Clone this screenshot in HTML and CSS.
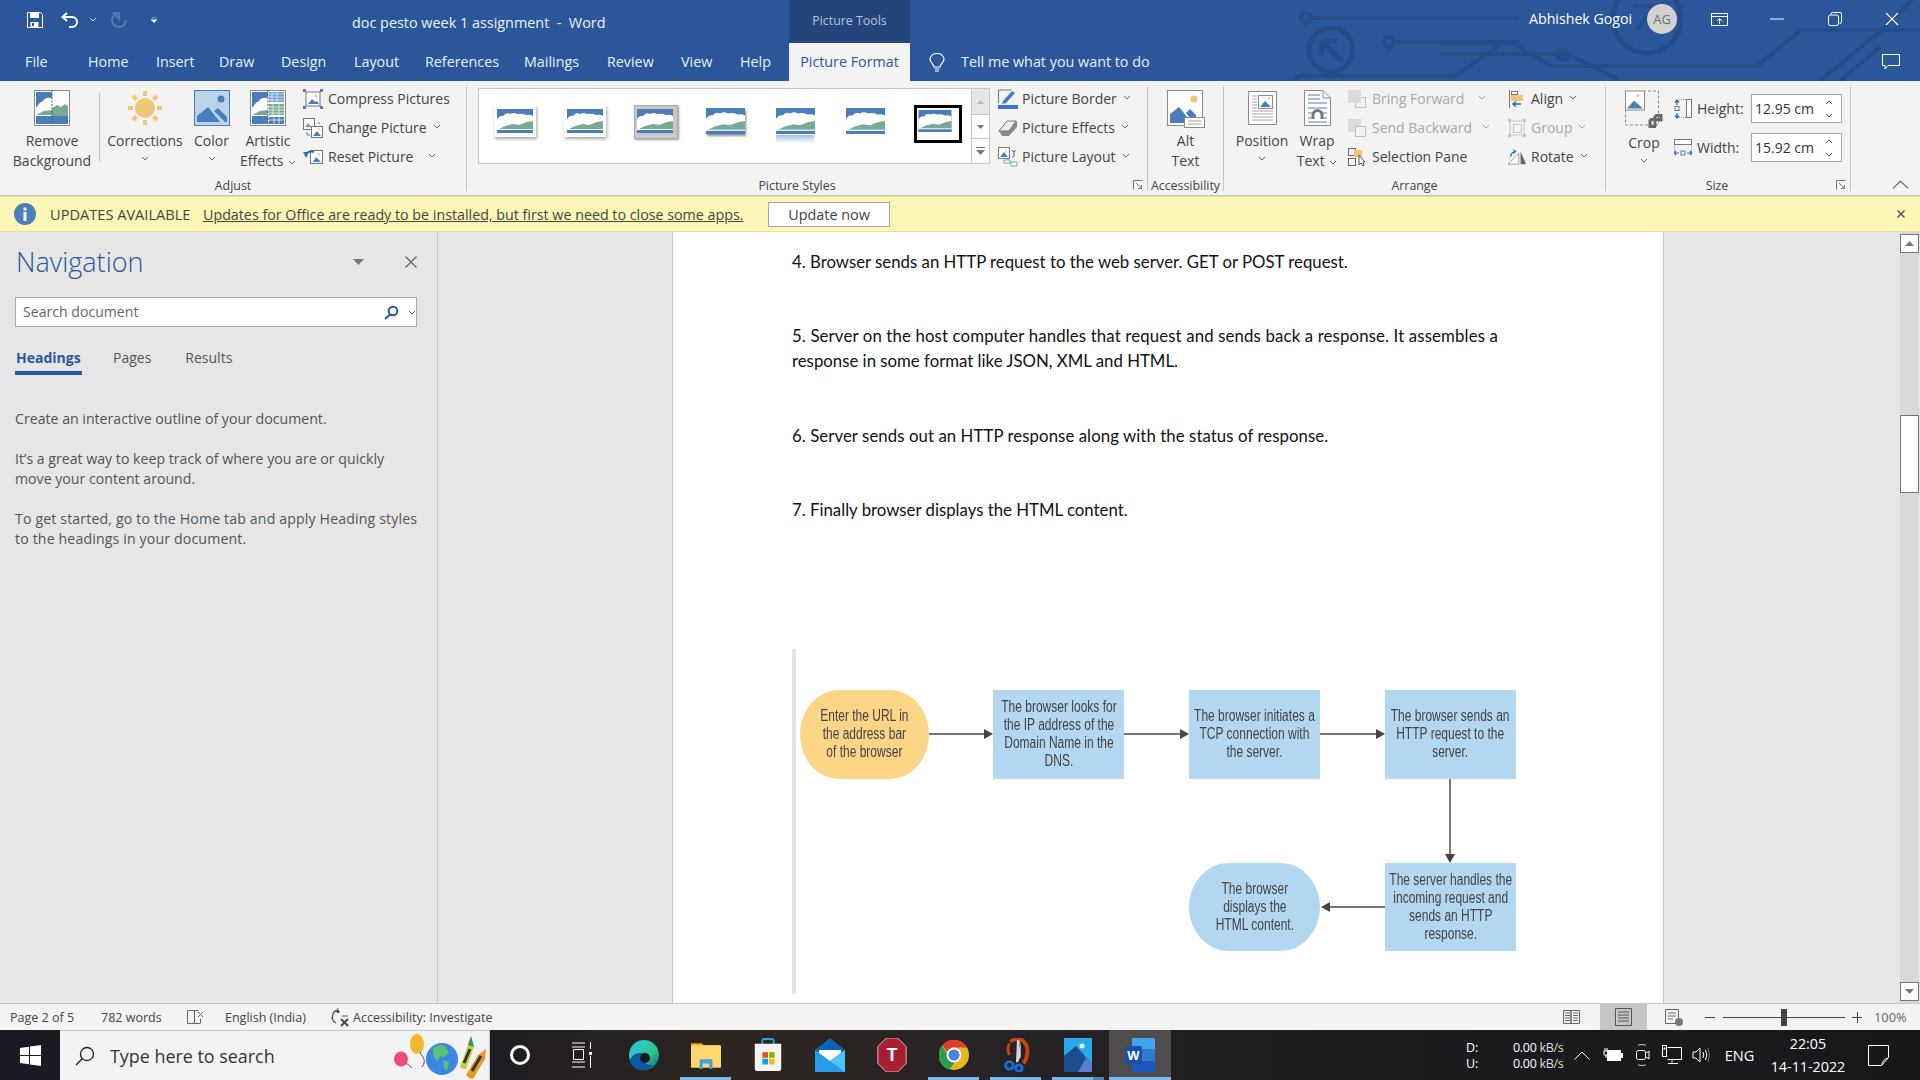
FILE: index.html
```html
<!DOCTYPE html>
<html lang="en">
<head>
<meta charset="utf-8">
<title>doc pesto week 1 assignment - Word</title>
<link rel="stylesheet" href="styles.css">
</head>
<body>
<svg class="defs" aria-hidden="true">
  <symbol id="chev" viewBox="0 0 8 5"><path d="M1 1l3 3 3-3" fill="none" stroke="#666" stroke-width="1"/></symbol>
  <symbol id="launch" viewBox="0 0 10 10"><path d="M.5 9.5v-9h9M3 3l5.5 5.5M5 8.5h3.5V5" fill="none" stroke="#777"/></symbol>
  <symbol id="thumb" viewBox="0 0 36 24"><rect width="36" height="24" fill="#4a7ebb"/><path d="M0 10q3-4 6-3 3-4 7-2 4-2 7 0 5-1 9 1 4-1 7 1v14H0z" fill="#fff"/><path d="M0 21l8-4 8-2 6 1 8-3 6-1v9z" fill="#7aa996"/><rect y="21" width="36" height="3" fill="#4a7ebb"/><rect y="20" width="36" height="1" fill="#fff"/></symbol>

  <symbol id="i-remove" viewBox="0 0 36 36"><rect x=".5" y=".5" width="35" height="35" fill="#fff" stroke="#8a8a8a"/><rect x="2" y="2" width="16" height="15" fill="#4a7ebb"/><path d="M2 19q3-7 7-8 2-4 9-3v11z" fill="#fff"/><path d="M2 25l8-4 8-1v5z" fill="#7aa996"/><path d="M18 26v-8l5-3 4 2 4-3 3 2v10z" fill="#7aa996"/><rect x="2" y="26" width="32" height="8" fill="#4a7ebb"/><path d="M18 0v36" stroke="#555" stroke-dasharray="2 1.5"/></symbol>
  <symbol id="i-sun" viewBox="0 0 36 36"><circle cx="18" cy="18" r="10" fill="#f0c674"/><path d="M18 1v5M18 30v5M1 18h5M30 18h5M6 6l3.500 3.500M26.500 26.500L30 30M6 30l3.500-3.500M26.500 9.500L30 6" stroke="#f0c674" stroke-width="4"/></symbol>
  <symbol id="i-color" viewBox="0 0 36 36"><rect x=".5" y=".5" width="35" height="35" fill="#bcd2e8" stroke="#4a7ebb"/><circle cx="27" cy="9" r="3.500" fill="#4a7ebb"/><path d="M3 32V26L14 17l12 15z" fill="#4a7ebb"/><path d="M20 21l4-3 9 9v5h-2z" fill="#4a7ebb"/></symbol>
  <symbol id="i-art" viewBox="0 0 36 36"><rect x=".5" y=".5" width="35" height="35" fill="#fff" stroke="#8a8a8a"/><rect x="2" y="2" width="16" height="15" fill="#4a7ebb"/><path d="M2 19q3-7 7-8 2-4 9-3v11z" fill="#fff"/><path d="M2 25l8-4 8-1v5z" fill="#7aa996"/><rect x="2" y="26" width="16" height="8" fill="#4a7ebb"/><rect x="19" y="2" width="15" height="10" fill="#6d9bcb"/><path d="M19 4h15M19 7h15M19 10h15M22 2v10M27 2v10" stroke="#cfe0ef"/><rect x="19" y="14" width="15" height="11" fill="#7aa996"/><path d="M19 17h15M19 20h15M19 23h15M23 14v11M29 14v11" stroke="#d6e6dc"/><rect x="19" y="27" width="15" height="7" fill="#4a7ebb"/><path d="M19 30h15M24 27v7M29 27v7" stroke="#cfe0ef"/><path d="M18 0v36" stroke="#555" stroke-dasharray="2 1.500"/></symbol>
  <symbol id="i-compress" viewBox="0 0 20 20"><rect x="3" y="3" width="14" height="14" fill="#fff" stroke="#777"/><path d="M5 15l4-5 3 3 2-1 2 3z" fill="#4a7ebb"/><circle cx="13" cy="7" r="1.500" fill="#f0c674"/><path d="M0 0h3v3H0zM17 0h3v3h-3zM0 17h3v3H0zM17 17h3v3h-3z" fill="#4a7ebb"/></symbol>
  <symbol id="i-change" viewBox="0 0 20 20"><rect x=".5" y=".5" width="11" height="11" fill="#fff" stroke="#777"/><path d="M2 9l3-4 4 4z" fill="#7aa996"/><rect x="8.500" y="8.500" width="11" height="11" fill="#fff" stroke="#777"/><path d="M10 18l4-5 4 5z" fill="#4a7ebb"/><circle cx="16" cy="11" r="1" fill="#f0c674"/><path d="M4 14v3h3M15 4l2 2" stroke="#4a7ebb" fill="none"/></symbol>
  <symbol id="i-reset" viewBox="0 0 20 20"><rect x="7.500" y="3.500" width="12" height="13" fill="#fff" stroke="#777"/><path d="M10 15l3-5 5 5z" fill="#4a7ebb"/><circle cx="16" cy="7" r="1.200" fill="#f0c674"/><path d="M2 9q3-6 9-4" fill="none" stroke="#2b6cb0" stroke-width="2"/><path d="M0 5l5 0-1 6z" fill="#2b6cb0"/></symbol>
  <symbol id="i-border" viewBox="0 0 20 20"><path d="M.5 14V1h13" fill="none" stroke="#777"/><path d="M5 12l9-10 3 2-9 10-4 1z" fill="#4a7ebb"/><rect y="16" width="20" height="4" fill="#4472c4"/></symbol>
  <symbol id="i-effects" viewBox="0 0 20 20"><path d="M1 13L9 3h10v6L11 18H4z" fill="#8a8a8a"/><path d="M1 13L9 3h9L11 13z" fill="#eee" stroke="#777"/></symbol>
  <symbol id="i-layout" viewBox="0 0 20 20"><rect x=".5" y=".5" width="11" height="11" fill="#fff" stroke="#777"/><path d="M2 10l4-5 4 5z" fill="#4a7ebb"/><circle cx="8" cy="3.500" r="1" fill="#f0c674"/><path d="M6 13h6v3H6zM13 15h6v4h-6z" fill="#fff" stroke="#7aa996"/><path d="M14 3l2 2 2-2M16 5v4l-2 2" stroke="#2b6cb0" fill="none"/></symbol>
  <symbol id="i-alt" viewBox="0 0 38 38"><rect x=".5" y=".5" width="35" height="35" fill="#fff" stroke="#8a8a8a"/><circle cx="27" cy="9" r="3.500" fill="#f0c674"/><path d="M3 33V24l9-7 13 16z" fill="#4a7ebb"/><path d="M19 23l4-4 6 6v3H23z" fill="#4a7ebb"/><rect x="17.500" y="27.500" width="20" height="10" fill="#fff" stroke="#8a8a8a"/><path d="M21 31h13M21 34h13" stroke="#999"/></symbol>
  <symbol id="i-pos" viewBox="0 0 29 34"><rect x=".5" y=".5" width="28" height="33" fill="#fff" stroke="#8a8a8a"/><path d="M4 5h5M4 8h5M4 11h5M4 14h5M4 17h5M4 20h21M4 23h21M4 26h21M4 29h21" stroke="#a6a6a6"/><rect x="10.500" y="4.500" width="14" height="13" fill="#fff" stroke="#8a8a8a"/><path d="M12 16l5-6 6 6z" fill="#4a7ebb"/><circle cx="21" cy="7.500" r="1.200" fill="#f0c674"/></symbol>
  <symbol id="i-wrap" viewBox="0 0 27 36"><path d="M.5.5H19l7.500 7.500v27.500H.5z" fill="#fff" stroke="#8a8a8a"/><path d="M19 .5V8h7.500" fill="none" stroke="#8a8a8a"/><path d="M4 5h12M4 9h12M4 13h19M4 18h19M4 23h6M17 23h6M4 28h6M17 28h6M4 32h19" stroke="#4a7ebb"/><path d="M9 29v-4a4.500 4.500 0 0 1 9 0v4" fill="none" stroke="#777" stroke-width="3"/></symbol>
  <symbol id="i-fwd" viewBox="0 0 18 18"><rect x="7.500" y="7.500" width="10" height="10" fill="none" stroke="#c0c0c0"/><rect width="13" height="13" fill="#dcdade"/></symbol>
  <symbol id="i-back" viewBox="0 0 18 18"><rect width="13" height="13" fill="#dcdade"/><rect x="7.500" y="7.500" width="10" height="10" fill="#f3f3f3" stroke="#c0c0c0"/></symbol>
  <symbol id="i-sel" viewBox="0 0 18 18"><rect x=".5" y=".5" width="7" height="7" fill="none" stroke="#666"/><rect x="6" y="2" width="8" height="7" fill="#f0c674"/><rect x=".5" y="10.500" width="7" height="7" fill="none" stroke="#666"/><path d="M11 7v10l2-2 2 3 1-1-1-3h2z" fill="#fff" stroke="#555"/></symbol>
  <symbol id="i-align" viewBox="0 0 16 18"><path d="M.5 0v18" stroke="#777"/><rect x="2.500" y="1.500" width="6" height="3" fill="#fff" stroke="#777"/><rect x="2" y="5" width="12" height="6" fill="#f0c674"/><path d="M12 14H4M7 11.500L4 14l3 2.500" fill="none" stroke="#2b6cb0" stroke-width="1.500"/></symbol>
  <symbol id="i-group" viewBox="0 0 18 18"><path d="M2 2h14v14H2z" fill="none" stroke="#c8c6c9"/><rect x="5.500" y="5.500" width="8" height="8" fill="none" stroke="#c8c6c9"/><path d="M0 0h3v3H0zM15 0h3v3h-3zM0 15h3v3H0zM15 15h3v3h-3z" fill="#c8c6c9"/></symbol>
  <symbol id="i-rotate" viewBox="0 0 20 18"><path d="M0 17L12 5v12z" fill="#fff" stroke="#999"/><path d="M14 3v14h6z" fill="#666"/><path d="M3 9q0-5 5-6M6 1l2.500 2L6 5" fill="none" stroke="#2b6cb0" stroke-width="1.300"/></symbol>
  <symbol id="i-crop" viewBox="0 0 38 37"><path d="M.5 19v15.500h33V.5H20" fill="none" stroke="#888" stroke-dasharray="3 2"/><rect x=".5" y=".5" width="19" height="19" fill="#fff" stroke="#8a8a8a"/><path d="M2 18l7-8 9 8z" fill="#4a7ebb"/><circle cx="13" cy="5" r="1.500" fill="#f0c674"/><path d="M30 25v11M25 29h11M25 29v7h6M30 25h6v6" fill="none" stroke="#666" stroke-width="3"/></symbol>
  <symbol id="i-height" viewBox="0 0 18 20"><path d="M3 1v5M1 3.500L3 1l2 2.500M3 19v-5M1 16.500L3 19l2-2.500" fill="none" stroke="#2b6cb0" stroke-width="1.300"/><rect x="1" y="7.500" width="4" height="4" fill="none" stroke="#777"/><rect x="12.500" y=".5" width="5" height="18" fill="#fff" stroke="#777"/><path d="M5 .5h7M5 18.500h7" stroke="#999" stroke-dasharray="1 1"/></symbol>
  <symbol id="i-width" viewBox="0 0 18 18"><rect x=".5" y=".5" width="17" height="5" fill="#fff" stroke="#777"/><path d="M.5 6v7M17.500 6v7" stroke="#999" stroke-dasharray="1 1"/><path d="M0 14h5M2 12l-2 2 2 2M18 14h-5M16 12l2 2-2 2" fill="none" stroke="#2b6cb0" stroke-width="1.200"/><rect x="7" y="12" width="4" height="4" fill="none" stroke="#777"/></symbol>
  <symbol id="spin" viewBox="0 0 8 20"><path d="M1 5l3-3 3 3M1 15l3 3 3-3" fill="none" stroke="#555"/></symbol>
</svg>

<header class="top">
  <svg class="circuit" viewBox="0 0 1920 81" aria-hidden="true">
    <g fill="none" stroke="#244c88" stroke-width="4">
      <circle cx="1306" cy="18" r="5"/><path d="M1311 18h208"/>
      <circle cx="1389" cy="42" r="5"/><path d="M1394 42h126M1295 79q5-5 12-3h148l50-35"/>
      <circle cx="1331" cy="50" r="22" stroke-width="5"/>
      <path d="M1322 41h15M1322 41v15M1323 42l19 19" stroke-width="5"/>
      <circle cx="1647" cy="19" r="34" stroke-width="5"/><path d="M1633 6h22l-18 24" stroke-width="4"/>
      <path d="M1440 43h72l40 23h205l44-36h119M1440 54h63l60 0 6 1 50 25M1563 50a5 5 0 1 0 .1 0M1820 81l62-51 30-30M1840 81l40-34"/>
    </g>
  </svg>
  <div class="titlerow">
    <div class="qat">
      <svg class="q-save" viewBox="0 0 16 16"><path d="M.5.500h13l2 2v13H.5z" fill="none" stroke="#fff"/><path d="M3 1h9v5H3zM3.500 10h8v5h-8z" fill="#fff"/><rect x="5" y="11" width="2" height="3" fill="#2b579a"/></svg>
      <svg class="q-undo" viewBox="0 0 18 16"><path d="M2 5h9a5 5 0 0 1 0 10H8M6 .9L1.500 5 6 9.100" fill="none" stroke="#fff" stroke-width="2"/></svg>
      <svg class="q-chev" viewBox="0 0 8 5"><path d="M1 1l3 3 3-3" fill="none" stroke="#d6e0ef"/></svg>
      <svg class="q-redo" viewBox="0 0 16 16"><path d="M8 1a7 7 0 1 0 7 7M8 1v6L3 1z" fill="none" stroke="#5379ae" stroke-width="2"/></svg>
      <svg class="q-more" viewBox="0 0 8 7"><path d="M1 .5h6M0 3l4 4 4-4z" fill="#fff" stroke="#fff" stroke-width=".6"/></svg>
    </div>
    <div class="doc-title">doc pesto week 1 assignment &nbsp;-&nbsp; Word</div>
    <div class="tools-tab">Picture Tools</div>
    <div class="user">Abhishek Gogoi</div>
    <div class="avatar">AG</div>
    <svg class="w-display" viewBox="0 0 17 13"><rect x=".5" y=".5" width="16" height="12" fill="none" stroke="#fff"/><path d="M.5 3.500h16M8.500 11V6M6 8l2.500-2.500L11 8" fill="none" stroke="#fff"/></svg>
    <svg class="w-min" viewBox="0 0 14 2"><path d="M0 1h14" stroke="#fff"/></svg>
    <svg class="w-max" viewBox="0 0 14 14"><rect x=".5" y="3" width="10" height="10.500" rx="2" fill="none" stroke="#fff"/><path d="M3 2.500V2a1.500 1.500 0 0 1 1.500-1.500H12A1.500 1.500 0 0 1 13.500 2v8a1.500 1.500 0 0 1-1.500 1.500h-.5" fill="none" stroke="#fff"/></svg>
    <svg class="w-close" viewBox="0 0 14 14"><path d="M1 1l12 12M13 1L1 13" stroke="#fff" stroke-width="1.100"/></svg>
  </div>
  <nav class="tabrow">
    <div class="tabs">
      <span class="tab">File</span>
      <span class="tab">Home</span>
      <span class="tab">Insert</span>
      <span class="tab">Draw</span>
      <span class="tab">Design</span>
      <span class="tab">Layout</span>
      <span class="tab">References</span>
      <span class="tab">Mailings</span>
      <span class="tab">Review</span>
      <span class="tab">View</span>
      <span class="tab">Help</span>
    </div>
    <span class="tab-active">Picture Format</span>
    <svg class="bulb" viewBox="0 0 16 20"><path d="M5 14c0-3-4-4-4-8a7 5.500 0 0 1 14 0c0 4-4 5-4 8z" fill="none" stroke="#fff" stroke-width="1.200"/><path d="M5.500 16h5M6 18h4" stroke="#fff" stroke-width="1.200"/></svg>
    <span class="tell">Tell me what you want to do</span>
    <svg class="comment" viewBox="0 0 18 16"><path d="M.5.500h17v11H6l-3 3.500v-3.500H.5z" fill="none" stroke="#fff"/></svg>
  </nav>
</header>

<section class="ribbon">
  <div class="group g-adjust">
    <div class="g-body">
      <div class="big b-remove"><svg class="ic36"><use href="#i-remove"/></svg><span>Remove<br>Background</span></div>
      <div class="vsep"></div>
      <div class="big b-corr"><svg class="ic36"><use href="#i-sun"/></svg><span>Corrections</span><svg class="chev chev-under"><use href="#chev"/></svg></div>
      <div class="big b-color"><svg class="ic36"><use href="#i-color"/></svg><span>Color</span><svg class="chev chev-under"><use href="#chev"/></svg></div>
      <div class="big b-art"><svg class="ic36"><use href="#i-art"/></svg><span>Artistic<br>Effects <svg class="chev"><use href="#chev"/></svg></span></div>
      <div class="smallcol sc-adj">
        <div class="srow"><svg class="ic20"><use href="#i-compress"/></svg>Compress Pictures</div>
        <div class="srow"><svg class="ic20"><use href="#i-change"/></svg>Change Picture <svg class="chev"><use href="#chev"/></svg></div>
        <div class="srow"><svg class="ic20"><use href="#i-reset"/></svg>Reset Picture <svg class="chev chev-wide"><use href="#chev"/></svg></div>
      </div>
    </div>
    <div class="g-label">Adjust</div>
  </div>
  <div class="group g-styles">
    <div class="g-body">
      <div class="gallery">
        <div class="thumbs">
          <div class="thumb t-card"><svg class="t-img"><use href="#thumb"/></svg></div>
          <div class="thumb t-card t-card2"><svg class="t-img"><use href="#thumb"/></svg></div>
          <div class="thumb t-grey"><svg class="t-img"><use href="#thumb"/></svg></div>
          <div class="thumb t-shadow"><svg class="t-full"><use href="#thumb"/></svg></div>
          <div class="thumb t-reflect"><svg class="t-full"><use href="#thumb"/></svg></div>
          <div class="thumb t-soft"><svg class="t-full"><use href="#thumb"/></svg></div>
          <div class="thumb t-black"><svg class="t-img"><use href="#thumb"/></svg></div>
        </div>
        <div class="gscroll">
          <div class="gs gs-up"><svg class="gs-i" viewBox="0 0 7 4"><path d="M0 4l3.500-4L7 4z" fill="#bbb"/></svg></div>
          <div class="gs gs-mid"><svg class="gs-i" viewBox="0 0 7 4"><path d="M0 0l3.500 4L7 0z" fill="#777"/></svg></div>
          <div class="gs gs-more"><svg class="gs-m" viewBox="0 0 9 8"><path d="M0 .5h9" stroke="#777"/><path d="M0 3l4.500 5L9 3z" fill="#777"/></svg></div>
        </div>
      </div>
      <div class="smallcol sc-pic">
        <div class="srow"><svg class="ic20"><use href="#i-border"/></svg>Picture Border <svg class="chev"><use href="#chev"/></svg></div>
        <div class="srow"><svg class="ic20"><use href="#i-effects"/></svg>Picture Effects <svg class="chev"><use href="#chev"/></svg></div>
        <div class="srow"><svg class="ic20"><use href="#i-layout"/></svg>Picture Layout <svg class="chev"><use href="#chev"/></svg></div>
      </div>
    </div>
    <div class="g-label gl-styles">Picture Styles</div>
    <svg class="launch"><use href="#launch"/></svg>
  </div>
  <div class="group g-access">
    <div class="g-body">
      <div class="big b-alt"><svg class="ic38"><use href="#i-alt"/></svg><span class="big-lines">Alt<br>Text</span></div>
    </div>
    <div class="g-label">Accessibility</div>
  </div>
  <div class="group g-arrange">
    <div class="g-body">
      <div class="big b-pos"><svg class="ic-pos"><use href="#i-pos"/></svg><span>Position</span><svg class="chev chev-under"><use href="#chev"/></svg></div>
      <div class="big b-wrap"><svg class="ic-wrap"><use href="#i-wrap"/></svg><span>Wrap<br>Text <svg class="chev"><use href="#chev"/></svg></span></div>
      <div class="smallcol sc-order">
        <div class="srow off"><svg class="ic18"><use href="#i-fwd"/></svg>Bring Forward <svg class="chev chev-gap2"><use href="#chev"/></svg></div>
        <div class="srow off"><svg class="ic18"><use href="#i-back"/></svg>Send Backward <svg class="chev chev-gap"><use href="#chev"/></svg></div>
        <div class="srow"><svg class="ic18"><use href="#i-sel"/></svg>Selection Pane</div>
      </div>
      <div class="smallcol sc-align">
        <div class="srow"><svg class="ic18"><use href="#i-align"/></svg>Align <svg class="chev"><use href="#chev"/></svg></div>
        <div class="srow off"><svg class="ic18"><use href="#i-group"/></svg>Group <svg class="chev"><use href="#chev"/></svg></div>
        <div class="srow"><svg class="ic18"><use href="#i-rotate"/></svg>Rotate <svg class="chev"><use href="#chev"/></svg></div>
      </div>
    </div>
    <div class="g-label">Arrange</div>
  </div>
  <div class="group g-size">
    <div class="g-body">
      <div class="big b-crop"><svg class="ic38"><use href="#i-crop"/></svg><span>Crop</span><svg class="chev chev-under"><use href="#chev"/></svg></div>
      <div class="sizes">
        <div class="sz"><svg class="ic-sz"><use href="#i-height"/></svg><span class="sz-l">Height:</span><div class="sz-in">12.95 cm<svg class="spin"><use href="#spin"/></svg></div></div>
        <div class="sz"><svg class="ic-sz"><use href="#i-width"/></svg><span class="sz-l">Width:</span><div class="sz-in">15.92 cm<svg class="spin"><use href="#spin"/></svg></div></div>
      </div>
    </div>
    <div class="g-label gl-size">Size</div>
    <svg class="launch"><use href="#launch"/></svg>
  </div>
  <svg class="collapse" viewBox="0 0 18 9"><path d="M1 8.500L9 1l8 7.500" fill="none" stroke="#555" stroke-width="1.100"/></svg>
</section>

<section class="notice">
  <svg class="info" viewBox="0 0 22 22"><circle cx="11" cy="11" r="11" fill="#4a7fb8"/><rect x="9.500" y="9" width="3" height="9" fill="#fff"/><rect x="9.500" y="4.500" width="3" height="3" fill="#fff"/></svg>
  <strong class="n-title">UPDATES AVAILABLE</strong>
  <span class="n-link">Updates for Office are ready to be installed, but first we need to close some apps.</span>
  <span class="n-btn">Update now</span>
  <svg class="n-x" viewBox="0 0 8 8"><path d="M.5.500l7 7M7.500.500l-7 7" stroke="#555" stroke-width="1.500"/></svg>
</section>

<main class="main">
  <aside class="nav">
    <div class="nav-head">
      <h1 class="nav-title">Navigation</h1>
      <svg class="nav-tri" viewBox="0 0 11 6"><path d="M0 0h11L5.500 6z" fill="#777"/></svg>
      <svg class="nav-x" viewBox="0 0 12 12"><path d="M.5.500l11 11M11.500.500l-11 11" stroke="#666" stroke-width="1.400"/></svg>
    </div>
    <div class="nav-search">
      <span class="ns-text">Search document</span>
      <svg class="ns-icon" viewBox="0 0 15 15"><circle cx="9" cy="6" r="4.300" fill="none" stroke="#2b579a" stroke-width="2"/><path d="M6 9.500L1 14" stroke="#2b579a" stroke-width="2"/></svg>
      <svg class="chev ns-chev"><use href="#chev"/></svg>
    </div>
    <div class="nav-tabs">
      <span class="nt nt-on">Headings</span>
      <span class="nt nt-pages">Pages</span>
      <span class="nt nt-res">Results</span>
    </div>
    <div class="nav-copy">
      <p>Create an interactive outline of your document.</p>
      <p>It’s a great way to keep track of where you are or quickly<br>move your content around.</p>
      <p class="nc-last">To get started, go to the Home tab and apply Heading styles<br>to the headings in your document.</p>
    </div>
  </aside>
  <div class="workspace">
    <article class="page">
      <p class="dp dp4">4. Browser sends an HTTP request to the web server. GET or POST request.</p>
      <p class="dp dp5">5. Server on the host computer handles that request and sends back a response. It assembles a<br>response in some format like JSON, XML and HTML.</p>
      <p class="dp dp6">6. Server sends out an HTTP response along with the status of response.</p>
      <p class="dp dp7">7. Finally browser displays the HTML content.</p>
      <figure class="figure">
        <svg class="arrows" viewBox="0 0 730 345" aria-hidden="true">
          <g stroke="#777" stroke-width="2" fill="none"><path d="M133 85h59M328 85h59M524 85h59M654 130v78M589 258h-55"/></g>
          <g fill="#444"><path d="M188 80l9 5-9 5zM384 80l9 5-9 5zM580 80l9 5-9 5zM649 205h10l-5 9zM534 253l-9 5 9 5z"/></g>
        </svg>
        <div class="node orange n1"><div class="nt1">Enter the URL in<br>the address bar<br>of the browser</div></div>
        <div class="node n2"><div class="nt1">The browser looks for<br>the IP address of the<br>Domain Name in the<br>DNS.</div></div>
        <div class="node n3"><div class="nt1">The browser initiates a<br>TCP connection with<br>the server.</div></div>
        <div class="node n4"><div class="nt1">The browser sends an<br>HTTP request to the<br>server.</div></div>
        <div class="node n5"><div class="nt1">The server handles the<br>incoming request and<br>sends an HTTP<br>response.</div></div>
        <div class="node round n6"><div class="nt1">The browser<br>displays the<br>HTML content.</div></div>
      </figure>
    </article>
    <div class="vscroll">
      <div class="vs-btn"><svg class="vs-tri" viewBox="0 0 9 5"><path d="M0 5l4.500-5L9 5z" fill="#777"/></svg></div>
      <div class="vs-thumb"></div>
      <div class="vs-btn vs-down"><svg class="vs-tri" viewBox="0 0 9 5"><path d="M0 0l4.500 5L9 0z" fill="#777"/></svg></div>
    </div>
  </div>
</main>

<footer class="status">
  <span class="st st-page">Page 2 of 5</span>
  <span class="st st-words">782 words</span>
  <svg class="st-book" viewBox="0 0 17 16"><path d="M.5 1.500h7v13h-7zM7.500 1.500h4M7.500 14.500h6M13.500 10v4" fill="none" stroke="#666"/><path d="M11 3l5 5M16 3l-5 5" stroke="#666"/></svg>
  <span class="st st-lang">English (India)</span>
  <svg class="st-acc" viewBox="0 0 20 20"><path d="M8 3a7 7 0 0 0-2 13" fill="none" stroke="#555" stroke-width="1.300"/><path d="M8 1v5M6 4l2 2 2-2M2 11H1M12 9h6" stroke="#555"/><path d="M11 12l7 7M18 12l-7 7" stroke="#444" stroke-width="1.800"/></svg>
  <span class="st st-acc-t">Accessibility: Investigate</span>
  <div class="views">
    <svg class="v-read" viewBox="0 0 17 16"><path d="M.5 1.500h7.500v13H.5zM8 1.500h8.500v13H8zM2 4h5M2 6.500h5M2 9h5M2 11.500h5M10 4h5M10 6.500h5M10 9h5M10 11.500h5" fill="none" stroke="#666"/></svg>
    <div class="v-print"><svg class="v-print-i" viewBox="0 0 17 18"><path d="M.5.500h16v17H.5zM3 4h11M3 7h11M3 10h11M3 13h11" fill="none" stroke="#555"/></svg></div>
    <svg class="v-web" viewBox="0 0 18 17"><path d="M.5.500h13v14H.5zM3 4h8M3 7h8M3 10h5" fill="none" stroke="#666"/><circle cx="14" cy="13" r="4" fill="#777"/></svg>
  </div>
  <div class="zoom">
    <span class="z-minus"></span>
    <div class="z-track"><span class="z-thumb"></span></div>
    <span class="z-plus"></span>
    <span class="st z-val">100%</span>
  </div>
</footer>

<div class="taskbar">
  <div class="start"><svg class="win" viewBox="0 0 21 21"><path d="M0 3l9-1.300V10H0zM10 1.500L21 0v10H10zM0 11h9v8.300L0 18zM10 11h11v10l-11-1.500z" fill="#fff"/></svg></div>
  <div class="search">
    <svg class="s-mag" viewBox="0 0 20 20"><circle cx="12" cy="8" r="6.500" fill="none" stroke="#222" stroke-width="1.300"/><path d="M7.500 12.500L1 19" stroke="#222" stroke-width="1.500"/></svg>
    <span class="s-text">Type here to search</span>
    <svg class="doodle" viewBox="0 0 96 50">
      <path d="M28 14q-3 8 2 13 3 5-1 10M10 32q6 2 9 6" fill="none" stroke="#5a3ba0"/>
      <ellipse cx="24" cy="14" rx="7" ry="10" fill="#f4b731"/>
      <ellipse cx="8" cy="29" rx="7" ry="7.500" fill="#ee4d77"/>
      <circle cx="49" cy="29" r="16" fill="#3a86e0"/>
      <path d="M40 18q6-4 12-2l4 7-5 4-4-1-2 5-4-3zM50 30l6 2-2 9-3-3z" fill="#5cc27a"/>
      <path d="M70 39l-3-2 8-22 3-9 3 11-8 22z" fill="#c5d13a"/><path d="M75 15l3-9 3 11z" fill="#3f8f6a"/><path d="M71 33l6-14" stroke="#333" stroke-width="3"/>
      <path d="M76 48l-3-3 12-20 8-6-1 10-12 20z" fill="#e89a2c"/><path d="M79 41l9-15" stroke="#333" stroke-width="3"/>
    </svg>
  </div>
  <div class="tb tb-cortana"><span class="cortana"></span></div>
  <div class="tb tb-tv"><svg class="tv" viewBox="0 0 21 26"><path d="M1 1h13M1 25h13M2.500 7.500h10v10h-10zM1 20h13M1 5h13M19.500 0v7M19.500 14v12" fill="none" stroke="#fff"/><rect x="18" y="10" width="3" height="3" fill="#fff"/></svg></div>
  <div class="tb"><svg class="app" viewBox="0 0 30 34"><defs><linearGradient id="edge" x1="0" y1="0" x2="1" y2="1"><stop offset="0" stop-color="#35c1f1"/><stop offset=".6" stop-color="#2cc88d"/><stop offset="1" stop-color="#0c59a4"/></linearGradient></defs><circle cx="15" cy="17" r="15" fill="url(#edge)"/><path d="M1 22q3-8 12-7 6 1 3 6-2 6 8 6-5 7-13 5Q2 30 1 22z" fill="#0c59a4"/><circle cx="16" cy="20" r="5" fill="#1b1a20"/></svg></div>
  <div class="tb running"><svg class="app" viewBox="0 0 28 28"><path d="M0 3h10l2 2h15v20H0z" fill="#e8a90f"/><rect y="5" width="28" height="21" rx="1" fill="#ffd76e"/><path d="M8 27v-9h12v9h-3v-5h-6v5z" fill="#4a9be0"/></svg></div>
  <div class="tb"><svg class="app" viewBox="0 0 30 36"><path d="M9 8V3q0-2 2-2h8q2 0 2 2v5" fill="none" stroke="#1aa7e0" stroke-width="2"/><path d="M1 6h28v26q0 3-3 3H4q-3 0-3-3z" fill="#f4f4f4"/><path d="M9 15h6v6H9z" fill="#f25022"/><path d="M16 15h6v6h-6z" fill="#7fba00"/><path d="M9 22h6v6H9z" fill="#00a4ef"/><path d="M16 22h6v6h-6z" fill="#ffb900"/></svg></div>
  <div class="tb"><svg class="app" viewBox="0 0 30 34"><path d="M0 12L15 0l15 12v22H0z" fill="#0a64b8"/><path d="M4 12h22v8l-11 8-11-8z" fill="#fff"/><path d="M0 12l15 11 15-11v22H0z" fill="#2a9be8"/><path d="M15 23l15-11v22z" fill="#49c6f7"/></svg></div>
  <div class="tb"><svg class="app" viewBox="0 0 30 36"><path d="M9 0h12l9 9v18l-9 9H9l-9-9V9z" fill="#a81e30" stroke="#eec" stroke-width=".8"/><text class="t-letter" x="15" y="24" text-anchor="middle">T</text></svg></div>
  <div class="tb running"><svg class="app" viewBox="0 0 30 30"><circle cx="15" cy="15" r="15" fill="#e8b71f"/><path d="M15 0a15 15 0 0 1 13 7.500H15a7.500 7.500 0 0 0-6.500 4L3 5.400A15 15 0 0 1 15 0z" fill="#d93f30"/><path d="M3 5.400l6 10 6.500 7 -5 7.300A15 15 0 0 1 3 5.400z" fill="#2c9d4e"/><circle cx="15" cy="15" r="6.500" fill="#4a84e0" stroke="#fff" stroke-width="1.800"/></svg></div>
  <div class="tb running"><svg class="app" viewBox="0 0 26 36"><path d="M7 4q6-5 12-2 7 5 6 14-1 7-4 11" fill="none" stroke="#c9430c" stroke-width="4"/><path d="M6 6q-3 5 0 12" fill="none" stroke="#c9430c" stroke-width="3"/><path d="M14 2l3 1-1 22-3 1zM18 4v16l-4 6z" fill="#d5d5d5"/><circle cx="6" cy="29" r="4" fill="none" stroke="#0e74d8" stroke-width="3"/><circle cx="16" cy="32" r="3.500" fill="none" stroke="#0e74d8" stroke-width="3"/></svg></div>
  <div class="tb running run-split"><svg class="app" viewBox="0 0 28 34"><rect width="28" height="34" fill="#29a9eb"/><circle cx="18" cy="8" r="2.500" fill="#fff"/><path d="M0 34V18l12-10 16 18v8z" fill="#1b4f8c"/><path d="M14 34l8-14 6 6v8z" fill="#5b7fcf"/></svg></div>
  <div class="tb running tb-active"><svg class="app" viewBox="0 0 30 34"><rect x="7" width="23" height="34" rx="1" fill="#41a5ee"/><rect x="7" y="11" width="23" height="12" fill="#2b7cd3"/><rect x="7" y="23" width="23" height="11" fill="#185abd"/><rect y="8" width="17" height="18" rx="1.500" fill="#1a4fa8"/><text class="w-letter" x="8.500" y="22" text-anchor="middle">W</text></svg></div>
  <div class="tray">
    <div class="speed"><span>D:</span><b>0.00 <i>kB/s</i></b><span>U:</span><b>0.00 <i>kB/s</i></b></div>
    <div class="ti ti-chev"><svg class="t-chev" viewBox="0 0 16 9"><path d="M.5 8.500L8 1l7.500 7.500" fill="none" stroke="#fff"/></svg></div>
    <div class="ti ti-bat"><svg class="t-bat" viewBox="0 0 20 14"><path d="M2 0v3M4 0v3M1 3h4v4H1zM3 7v3" stroke="#fff" fill="none"/><rect x="4.500" y="2.500" width="13" height="10" fill="#fff" stroke="#fff"/><rect x="18" y="5" width="2" height="5" fill="#fff"/></svg></div>
    <div class="ti ti-meet"><svg class="t-meet" viewBox="0 0 15 22"><path d="M3 1q4-1 8 0M3 21q4 1 8 0" stroke="#ccc" fill="none"/><rect x="1.500" y="6.500" width="9" height="9" rx="2" fill="none" stroke="#fff"/><path d="M11 9l3-2v8l-3-2" fill="none" stroke="#fff"/></svg></div>
    <div class="ti ti-net"><svg class="t-net" viewBox="0 0 20 20"><path d="M5.500 2.500h14v12h-14M10 14.500v3M6 18.500h10" fill="none" stroke="#fff"/><rect x=".5" y=".5" width="4" height="11" fill="#1c1c1e" stroke="#fff"/><rect x="1.500" y="2.500" width="2" height="2" fill="#fff"/></svg></div>
    <div class="ti ti-vol"><svg class="t-vol" viewBox="0 0 18 18"><path d="M1 6h3l4-4v14l-4-4H1z" fill="none" stroke="#fff"/><path d="M11 6q1.500 3 0 6M13.500 4q2.500 5 0 10" fill="none" stroke="#fff"/><path d="M16 2q3 7 0 14" fill="none" stroke="#777"/></svg></div>
    <div class="ti ti-eng">ENG</div>
    <div class="clock"><div>22:05</div><div>14-11-2022</div></div>
    <svg class="t-note" viewBox="0 0 21 21"><path d="M.5.500h20v12l-7 8H.5z" fill="none" stroke="#fff"/><path d="M14 20q0-5 6-7" fill="none" stroke="#fff"/></svg>
  </div>
</div>
</body>
</html>
```

FILE: styles.css
```css
* { box-sizing: border-box; }
html, body { margin: 0; padding: 0; }
body {
  width: 1920px; height: 1080px; overflow: hidden;
  display: flex; flex-direction: column;
  font-family: "Open Sans", "Noto Sans", sans-serif;
  font-size: 14px; color: #444;
  background: #e6e6e6;
}
svg { display: block; flex: none; }
.defs { position: absolute; width: 0; height: 0; }

/* Title bar */
.top { position: relative; height: 81px; flex: none; background: #2b579a; color: #fff; overflow: hidden; }
.circuit { position: absolute; left: 0; top: 0; width: 1920px; height: 81px; }
.titlerow { position: relative; height: 43px; display: flex; align-items: flex-start; }
.qat { width: 352px; height: 43px; display: flex; align-items: center; padding-left: 27px; flex: none; }
.q-save { width: 16px; height: 16px; margin-top: -4px; }
.q-undo { width: 18px; height: 16px; margin-left: 18px; margin-top: -4px; }
.q-chev { width: 8px; height: 5px; margin-left: 10px; margin-top: -4px; }
.q-redo { width: 16px; height: 16px; margin-left: 14px; margin-top: -4px; }
.q-more { width: 6px; height: 6px; margin-left: 24px; margin-top: -4px; }
.doc-title { width: 437px; font-size: 14.4px; line-height: 46px; flex: none; color: #eef2f8; }
.tools-tab { width: 121px; height: 43px; flex: none; background: #234579; color: #b4c4dc; font-size: 12.4px; line-height: 41px; text-align: center; }
.user { margin-left: 619px; width: 118px; line-height: 38px; font-size: 14.2px; white-space: nowrap; flex: none; }
.avatar { width: 30px; height: 30px; margin-top: 4px; border-radius: 50%; background: #d2d2d2; color: #6e6e6e; font-size: 13px; line-height: 30px; text-align: center; flex: none; }
.w-display { width: 17px; height: 13px; margin-left: 34px; margin-top: 13px; }
.w-min { width: 14px; height: 2px; margin-left: 42px; margin-top: 18px; }
.w-max { width: 14px; height: 14px; margin-left: 44px; margin-top: 12px; }
.w-close { width: 14px; height: 14px; margin-left: 43px; margin-top: 12px; }

.tabrow { position: relative; height: 38px; display: flex; align-items: center; padding-left: 25px; }
.tabs { display: grid; grid-template-columns: 63px 68px 63px 62px 73px 71px 99px 83px 74px 59px 49px; width: 764px; flex: none; margin-top: -2px; }
.tab { font-size: 14.3px; color: #eaf0f8; white-space: nowrap; }
.tab-active { width: 121px; height: 38px; background: #f3f3f3; color: #2b579a; font-size: 14.3px; line-height: 37px; text-align: center; flex: none; }
.bulb { width: 16px; height: 20px; margin-left: 19px; margin-top: 2px; }
.tell { margin-left: 16px; font-size: 14.35px; color: #eaf0f8; white-space: nowrap; margin-top: -2px; }
.comment { width: 18px; height: 16px; margin-left: auto; margin-right: 20px; }

/* Ribbon */
.ribbon { position: relative; height: 115px; flex: none; display: flex; background: #f3f3f3; border-bottom: 1px solid #c6c6c6; }
.group { position: relative; height: 105px; margin-top: 5px; border-right: 1px solid #c6c6c6; display: flex; flex-direction: column; flex: none; }
.g-body { height: 93px; display: flex; flex: none; }
.g-label { height: 12px; line-height: 14px; text-align: center; font-size: 12.4px; color: #444; white-space: nowrap; }
.gl-styles { padding-right: 20px; }
.gl-size { padding-right: 22px; }
.g-adjust { width: 467px; }
.g-styles { width: 681px; }
.g-access { width: 76px; }
.g-arrange { width: 382px; }
.g-size { width: 245px; }
.launch { position: absolute; right: 4px; bottom: 1px; width: 10px; height: 10px; }
.collapse { position: absolute; left: 1892px; top: 99px; width: 17px; height: 9px; }

.big { display: flex; flex-direction: column; align-items: center; text-align: center; line-height: 20px; padding-top: 4px; flex: none; white-space: nowrap; }
.big > span { margin-top: 5px; }
.big > span .chev { display: inline-block; vertical-align: middle; margin-left: 1px; }
.ic36 { width: 36px; height: 36px; }
.ic38 { width: 38px; height: 38px; }
.ic-pos { width: 29px; height: 34px; margin-top: 1px; margin-bottom: 1px; }
.ic-wrap { width: 27px; height: 36px; }
.ic-sz { width: 18px; height: 20px; }
.ic20 { width: 20px; height: 20px; margin-right: 5px; }
.sc-pic .ic20 { margin-right: 4px; }
.ic18 { width: 18px; height: 18px; margin-right: 5px; }
.sc-order .ic18 { margin-right: 6px; }
.chev { width: 8px; height: 5px; }
.chev-under { margin-top: 5px; }
.big-lines { margin-top: 3px !important; }
.b-remove { width: 84px; margin-left: 10px; }
.vsep { width: 1px; height: 69px; background: #c6c6c6; margin: 7px 0 0 5px; flex: none; }
.b-corr { width: 90px; }
.b-color { width: 43px; }
.b-art { width: 70px; }
.smallcol { display: flex; flex-direction: column; margin-top: -2px; flex: none; }
.srow { height: 29px; display: flex; align-items: center; white-space: nowrap; }
.srow .chev { margin-left: 6px; margin-top: -2px; }
.srow .chev-wide { margin-left: 15px; }
.srow .chev-gap { margin-left: 10px; }
.srow .chev-gap2 { margin-left: 14px; }
.off { color: #a8a8a8; }
.off .chev { opacity: .55; }

.gallery { width: 512px; height: 76px; margin: 2px 0 0 11px; display: flex; background: #fff; border: 1px solid #c6c6c6; flex: none; }
.thumbs { display: flex; width: 492px; flex: none; padding-left: 1px; }
.thumb { width: 70px; height: 32px; margin-top: 16px; display: flex; align-items: center; justify-content: center; flex: none; position: relative; }
.t-img { width: 36px; height: 24px; }
.t-full { width: 39px; height: 28px; }
.t-card .t-img, .t-card2 .t-img { background: #fff; }
.t-card::before { content: ""; position: absolute; left: 14px; top: 0; width: 42px; height: 32px; background: #fff; box-shadow: 1px 2px 3px rgba(0,0,0,.35); }
.t-card .t-img { position: relative; }
.t-grey::before { content: ""; position: absolute; left: 14px; top: 0; width: 42px; height: 32px; background: #c8c8c8; border: 1px solid #aaa; box-shadow: 1px 1px 2px rgba(0,0,0,.4); }
.t-grey .t-img { position: relative; }
.t-shadow .t-full { filter: drop-shadow(1px 2px 1px rgba(0,0,0,.45)); }
.t-reflect::after { content: ""; position: absolute; left: 16px; top: 30px; width: 38px; height: 8px; background: linear-gradient(#9fbfe0, #fff); }
.t-soft .t-full { filter: blur(.6px); }
.t-black::before { content: ""; position: absolute; left: 14px; top: 0; width: 42px; height: 32px; background: #fff; border: 3px solid #000; outline: 0; }
.t-black .t-img { position: relative; width: 34px; height: 22px; }
.gscroll { width: 18px; display: flex; flex-direction: column; flex: none; border-left: 1px solid #c6c6c6; }
.gs { display: flex; align-items: center; justify-content: center; background: #fff; border-bottom: 1px solid #c6c6c6; flex: none; }
.gs-up { height: 26px; background: #e6e6e6; }
.gs-mid { height: 24px; }
.gs-more { height: 24px; border-bottom: 0; }
.gs-i { width: 7px; height: 4px; }
.gs-m { width: 9px; height: 8px; }
.sc-pic { margin-left: 8px; }
.sc-order { margin-left: 11px; width: 160px; }
.b-alt { width: 75px; }
.b-pos { width: 70px; margin-left: 3px; }
.b-wrap { width: 40px; }
.b-crop { width: 50px; margin-left: 13px; }
.sizes { margin-left: 5px; margin-top: 8px; display: flex; flex-direction: column; gap: 10px; flex: none; }
.sz { height: 29px; display: flex; align-items: center; }
.sz-l { width: 54px; margin-left: 5px; white-space: nowrap; }
.sz-in { width: 91px; height: 29px; background: #fff; border: 1px solid #a6a6a6; display: flex; align-items: center; padding-left: 3px; color: #333; white-space: nowrap; }
.spin { width: 8px; height: 20px; margin-left: auto; margin-right: 8px; }

/* Notice bar */
.notice { height: 36px; flex: none; display: flex; align-items: center; background: #fcf7b6; border-top: 1px solid #e6dd8e; border-bottom: 1px solid #e6e09a; padding-left: 14px; }
.info { width: 22px; height: 22px; }
.n-title { margin-left: 14px; font-weight: 400; font-size: 14.6px; color: #444; white-space: nowrap; width: 153px; flex: none; }
.n-link { font-size: 14.28px; text-decoration: underline; color: #444; width: 565px; white-space: nowrap; flex: none; }
.n-btn { width: 122px; height: 25px; background: #fff; border: 1px solid #a6a6a6; text-align: center; line-height: 23px; flex: none; font-size: 14.4px; }
.n-x { width: 8px; height: 8px; margin-left: auto; margin-right: 15px; }

/* Main */
.main { height: 771px; flex: none; display: flex; }
.nav { width: 438px; flex: none; background: #e6e6e6; border-right: 1px solid #c6c6c6; padding: 0 20px 0 15px; }
.nav-head { height: 59px; display: flex; align-items: center; }
.nav-title { margin: 0; font-size: 27px; font-weight: 300; color: #2b579a; width: 338px; flex: none; position: relative; left: 1px; }
.nav-tri { width: 11px; height: 6px; }
.nav-x { width: 12px; height: 12px; margin-left: 41px; }
.nav-search { width: 402px; height: 30px; margin-top: 6px; background: #fff; border: 1px solid #aaa; display: flex; align-items: center; padding-left: 7px; }
.ns-text { color: #666; width: 361px; flex: none; font-size: 14.1px; margin-top: -2px; }
.ns-icon { width: 15px; height: 15px; }
.ns-chev { margin-left: 9px; }
.nav-tabs { display: flex; height: 33px; margin-top: 15px; line-height: 31px; }
.nt { color: #555; font-size: 14px; }
.nt-on { width: 67px; color: #2b579a; font-weight: 700; border-bottom: 4px solid #2b579a; padding-left: 1px; white-space: nowrap; flex: none; }
.nt-pages { margin-left: 31px; }
.nt-res { margin-left: 34px; }
.nav-copy { margin-top: 34px; font-size: 14.15px; line-height: 20px; color: #555; white-space: nowrap; }
.nav-copy p { margin: 0 0 20px; }
.nav-copy .nc-last { letter-spacing: .14px; }

.workspace { flex: 1; display: flex; background: #e6e6e6; padding-left: 234px; }
.page { width: 992px; flex: none; background: #fff; border-left: 1px solid #c6c6c6; border-right: 1px solid #c6c6c6; padding-left: 119px; overflow: hidden; font-family: "Lato", "Open Sans", sans-serif; color: #111; font-size: 16.8px; line-height: 25.5px; }
.dp { margin: 0; white-space: nowrap; }
.dp4 { margin-top: 17px; }
.dp5 { margin-top: 48px; }
.dp5::first-line { letter-spacing: .14px; }
.dp6 { margin-top: 49px; letter-spacing: .07px; }
.dp7 { margin-top: 49px; }

.figure { position: relative; margin: 0; margin-top: 126px; width: 733px; height: 345px; border-left: 4px solid #e2e2e2; }
.arrows { position: absolute; left: 0; top: 0; width: 730px; height: 345px; }
.node { position: absolute; width: 131px; height: 89px; background: #b3d7f0; display: flex; align-items: center; justify-content: center; color: #444; font-family: "Liberation Sans", Arial, sans-serif; font-size: 15.6px; line-height: 18px; text-align: center; }
.nt1 { white-space: nowrap; transform: scaleX(.77); }
.orange { background: #fdd587; }
.orange, .round { border-radius: 30% / 50%; }
.n1 { left: 4px; top: 41px; width: 129px; }
.n2 { left: 197px; top: 41px; }
.n3 { left: 393px; top: 41px; }
.n4 { left: 589px; top: 41px; }
.n5 { left: 589px; top: 214px; height: 88px; }
.n6 { left: 393px; top: 214px; height: 88px; }

.vscroll { width: 19px; margin-left: 236px; padding-top: 2px; padding-bottom: 2px; background: #d9d9d9; display: flex; flex-direction: column; flex: none; }
.vs-btn { height: 19px; background: #fff; border: 1px solid #777; display: flex; align-items: center; justify-content: center; flex: none; }
.vs-tri { width: 9px; height: 5px; }
.vs-thumb { height: 78px; margin-top: 162px; background: #fff; border: 1px solid #777; flex: none; }
.vs-down { margin-top: auto; }

/* Status */
.status { height: 27px; flex: none; display: flex; align-items: center; background: #f3f3f3; border-top: 1px solid #c6c6c6; font-size: 12.5px; padding-left: 10px; }
.st { white-space: nowrap; color: #444; flex: none; }
.st-page { width: 91px; }
.st-words { width: 86px; }
.st-book { width: 17px; height: 16px; margin-right: 21px; }
.st-lang { width: 105px; }
.st-acc { width: 20px; height: 20px; margin-right: 3px; }
.st-acc-t { width: 1210px; }
.views { width: 137px; height: 26px; display: flex; align-items: center; flex: none; }
.v-read { width: 17px; height: 16px; margin-right: 20px; }
.v-print { width: 47px; height: 26px; background: #c6c6c6; display: flex; align-items: center; justify-content: center; flex: none; }
.v-print-i { width: 17px; height: 18px; }
.v-web { width: 18px; height: 17px; margin-left: 18px; }
.zoom { display: flex; align-items: center; flex: none; margin-left: 5px; }
.z-minus { width: 10px; height: 1px; background: #444; flex: none; }
.z-track { position: relative; width: 122px; height: 1px; margin-left: 8px; background: #444; flex: none; }
.z-thumb { position: absolute; left: 58px; top: -8px; width: 6px; height: 17px; background: #444; }
.z-plus { position: relative; width: 10px; height: 1px; margin-left: 7px; background: #444; flex: none; }
.z-plus::after { content: ""; position: absolute; left: 4.5px; top: -5px; width: 1px; height: 11px; background: #444; }
.z-val { margin-left: 12px; color: #666; font-size: 12.8px; }

/* Taskbar */
.taskbar { height: 50px; flex: none; display: flex; align-items: stretch; background: linear-gradient(90deg, #1b1a22 0, #1f1c22 490px, #2c2520 720px, #272226 1000px, #1d1c1f 1300px, #17181a 1920px); color: #fff; }
.start { width: 60px; flex: none; display: flex; align-items: center; justify-content: center; }
.win { width: 21px; height: 21px; }
.search { width: 430px; flex: none; background: #f3f3f3; border-top: 1px solid #c6c6c6; border-right: 1px solid #c6c6c6; display: flex; align-items: center; padding-left: 15px; }
.s-mag { width: 20px; height: 20px; }
.s-text { margin-left: 15px; width: 283px; font-size: 17.9px; color: #333; white-space: nowrap; flex: none; }
.doodle { width: 96px; height: 50px; margin-top: -2px; }
.tb { position: relative; width: 62px; flex: none; display: flex; align-items: center; justify-content: center; }
.tb-cortana { width: 60px; }
.tb-tv { width: 63px; }
.cortana { width: 20px; height: 20px; border: 3px solid #fff; border-radius: 50%; }
.tv { width: 21px; height: 26px; }
.app { width: 30px; height: 34px; }
.running::after { content: ""; position: absolute; left: 5px; right: 6px; bottom: 0; height: 3px; background: #76b9ed; }
.tb-active { background: #504b4c; }
.tb-active::after { left: 0; right: 0; }
.run-split::before { content: ""; position: absolute; right: 5px; bottom: 0; width: 11px; height: 3px; background: #4f86b3; z-index: 1; }
.t-letter { font: 700 19px "Liberation Sans", sans-serif; fill: #fff; }
.w-letter { font: 700 13px "Liberation Sans", sans-serif; fill: #fff; }
.tray { display: flex; align-items: center; margin-left: 295px; flex: none; }
.speed { width: 102px; display: grid; grid-template-columns: 47px 55px; font-size: 12.5px; line-height: 16px; margin-top: 2px; flex: none; }
.speed b { font-weight: 400; white-space: nowrap; letter-spacing: -.3px; }
.speed i { font-style: normal; color: #ddd; }
.ti { display: flex; align-items: center; justify-content: center; flex: none; }
.ti-chev { width: 28px; }
.t-chev { width: 16px; height: 9px; }
.ti-bat { width: 33px; }
.t-bat { width: 20px; height: 14px; }
.ti-meet { width: 27px; }
.t-meet { width: 15px; height: 22px; }
.ti-net { width: 31px; }
.t-net { width: 20px; height: 20px; }
.ti-vol { width: 28px; }
.t-vol { width: 18px; height: 18px; }
.ti-eng { width: 49px; font-size: 14.6px; }
.clock { width: 88px; text-align: center; font-size: 14.3px; line-height: 23px; flex: none; }
.t-note { width: 21px; height: 21px; margin-left: 16px; }
```
